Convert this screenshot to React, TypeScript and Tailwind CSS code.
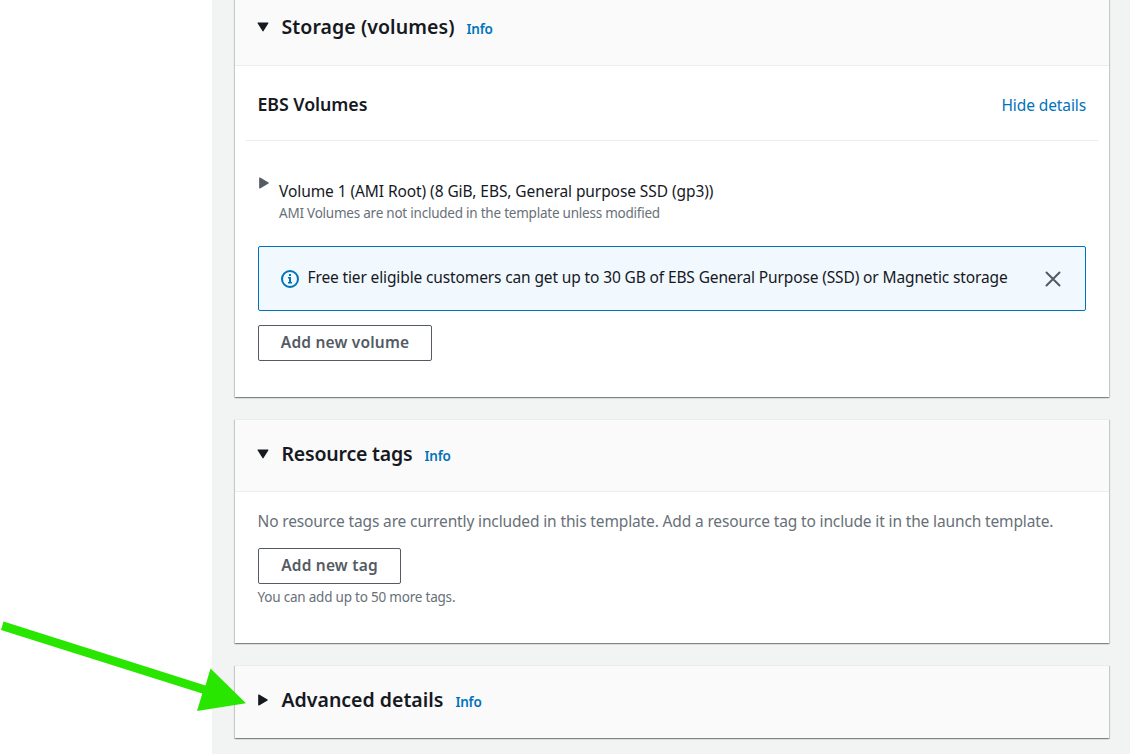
import type { ReactNode } from "react";

function Caret({ open = false, className = "" }: { open?: boolean; className?: string }) {
  return (
    <svg viewBox="0 0 12 12" className={`h-3 w-3 shrink-0 ${className}`} aria-hidden="true">
      <path
        d={open ? "M1.100 2H10.900L6 9.800Z" : "M1.800 1V11L10.200 6Z"}
        fill="currentColor"
        stroke="currentColor"
        strokeWidth="1.2"
        strokeLinejoin="round"
      />
    </svg>
  );
}

function PanelHeader({ title, titleClass, open, className = "" }: { title: string; titleClass: string; open: boolean; className?: string }) {
  return (
    <header className={`flex shrink-0 bg-[#fafafa] pt-[20px] pl-[22px] ${className}`}>
      <Caret open={open} className="mt-[8px] text-[#16191f]" />
      <h2 className={`ml-[12.5px] text-[19.5px] leading-[27px] font-semibold text-[#16191f] ${titleClass}`}>{title}</h2>
      <a href="#" className="ml-3 pt-[5px] text-[13.5px] leading-[23px] font-semibold tracking-[-0.2px] text-[#0073bb]">
        Info
      </a>
    </header>
  );
}

function Panel({ className = "", children }: { className?: string; children: ReactNode }) {
  return (
    <section
      className={`flex shrink-0 flex-col border-t border-[#eaeded] bg-white shadow-[0_1px_1px_0_rgba(0,28,36,0.3),1px_1px_1px_0_rgba(0,28,36,0.15),-1px_1px_1px_0_rgba(0,28,36,0.15)] ${className}`}
    >
      {children}
    </section>
  );
}

function OutlineButton({ className = "", children }: { className?: string; children: ReactNode }) {
  return (
    <button
      className={`h-9 shrink-0 rounded-[2px] border border-[#545b64] bg-white text-[15.5px] leading-[22px] font-semibold tracking-[0.2px] text-[#545b64] ${className}`}
    >
      {children}
    </button>
  );
}

export default function App() {
  return (
    <div className="relative flex h-[754px] w-[1130px] overflow-hidden bg-white font-['Noto_Sans',sans-serif] whitespace-nowrap">
      <div className="w-[212px] shrink-0" />
      <main className="flex flex-1 flex-col gap-[22px] bg-[#f2f3f3] pr-[21px] pl-[23px]">
        <Panel className="-mt-[8px] h-[405px]">
          <PanelHeader title="Storage (volumes)" titleClass="tracking-[0.07px]" className="h-[72px]" open />
          <div className="flex flex-col border-t border-[#eaeded] px-[11px]">
            <div className="flex h-[75px] shrink-0 justify-between border-b border-[#eaeded] px-3">
              <h3 className="-ml-[0.5px] pt-[25px] text-[17.8px] leading-[26px] font-semibold tracking-[-0.05px] text-[#16191f]">EBS Volumes</h3>
              <a href="#" className="pt-[28px] text-[15.5px] leading-[22px] tracking-[-0.1px] text-[#0073bb]">
                Hide details
              </a>
            </div>
            <div className="flex flex-col px-3 pt-[36px]">
              <div className="flex">
                <Caret className="text-[#545b64]" />
                <div className="ml-[9px] pt-[3px]">
                  <p className="text-[15.5px] leading-[22px] tracking-[-0.08px] text-[#16191f]">
                    Volume 1 (AMI Root) (8 GiB, EBS, General purpose SSD (gp3))
                  </p>
                  <p className="text-[13.5px] leading-[22px] tracking-[-0.23px] text-[#687078]">
                    AMI Volumes are not included in the template unless modified
                  </p>
                </div>
              </div>
              <div className="mt-[22px] flex h-[65px] rounded-[2px] border border-[#0073bb] bg-[#f1f8fe] pr-[24px] pl-[22px]">
                <svg viewBox="0 0 18 18" className="mt-[23px] h-[18px] w-[18px] shrink-0 text-[#0073bb]" aria-hidden="true">
                  <circle cx="9" cy="9" r="8" fill="none" stroke="currentColor" strokeWidth="2" />
                  <path d="M8 4h2v2H8zM7 7h3v5h1v1.500H7V12h1V8.500H7z" fill="currentColor" />
                </svg>
                <p className="ml-[8.5px] pt-[19px] text-[15.5px] leading-[22px] tracking-[-0.13px] text-[#16191f]">
                  Free tier eligible customers can get up to 30 GB of EBS General Purpose (SSD) or Magnetic storage
                </p>
                <svg viewBox="0 0 16 16" className="mt-[24px] ml-auto h-4 w-4 shrink-0" aria-hidden="true">
                  <path d="M1.500 1.500 14.500 14.500M14.500 1.500 1.500 14.500" stroke="#545b64" strokeWidth="2" strokeLinecap="round" />
                </svg>
              </div>
              <OutlineButton className="mt-[14px] w-[174px] pb-[3px]">Add new volume</OutlineButton>
            </div>
          </div>
        </Panel>

        <Panel className="h-[224px]">
          <PanelHeader title="Resource tags" titleClass="tracking-[-0.2px]" className="h-[71px]" open />
          <div className="flex flex-col items-start border-t border-[#eaeded] px-[23px] pt-[18px]">
            <p className="-ml-[0.5px] text-[15.5px] leading-[22px] tracking-[-0.14px] text-[#687078]">
              No resource tags are currently included in this template. Add a resource tag to include it in the launch template.
            </p>
            <OutlineButton className="mt-[16px] w-[143px] pb-[2px]">Add new tag</OutlineButton>
            <p className="mt-[2px] -ml-[0.5px] text-[13.5px] leading-[22px] tracking-[-0.21px] text-[#687078]">You can add up to 50 more tags.</p>
          </div>
        </Panel>

        <Panel className="h-[73px]">
          <PanelHeader title="Advanced details" titleClass="" className="h-[72px]" open={false} />
        </Panel>
      </main>

      <svg viewBox="0 0 250 100" className="pointer-events-none absolute top-[620px] left-0 h-[100px] w-[250px]" aria-hidden="true">
        <path d="M3.500 1.500 205.500 65.500 210.500 48.500 246 83.300 197 91 202.300 73.500 1 10Z" fill="#29e600" />
      </svg>
    </div>
  );
}
